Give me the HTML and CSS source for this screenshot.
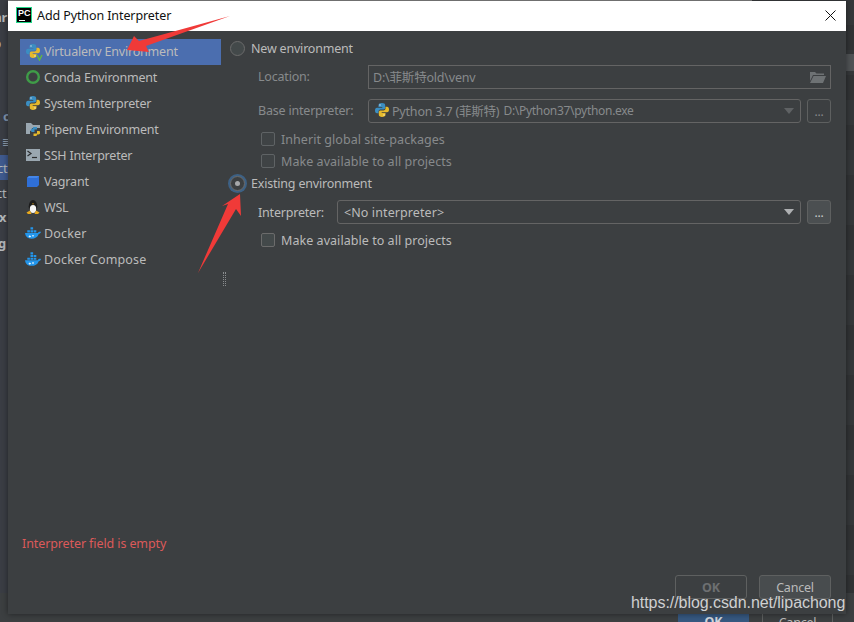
FILE: index.html
```html
<!DOCTYPE html>
<html lang="en">
<head>
    <meta charset="UTF-8">
    <meta name="viewport" content="width=device-width, initial-scale=1.0">
    <title>Add Python Interpreter</title>
    <link rel="stylesheet" href="styles.css">
</head>
<body>
    <svg width="0" height="0" class="defs">
        <defs>
            <symbol id="py" viewBox="0 0 16 16">
                <path fill="#3b8ec2" d="M8 1C5.600 1 4.500 1.900 4.500 3.200V5h3.800v.7H3C1.700 5.700 1 6.800 1 8.500c0 1.700.7 2.800 2 2.800h1.500V9.400c0-1.100.9-1.900 2-1.900h3c1 0 1.700-.7 1.700-1.700V3.200C11.200 1.900 10 1 8 1z"/>
                <path fill="#e5b92c" d="M8 15c2.400 0 3.500-.9 3.500-2.200V11H7.700v-.7H13c1.300 0 2-1.100 2-2.800 0-1.700-.7-2.800-2-2.800h-1.500v1.900c0 1.100-.9 1.900-2 1.900h-3c-1 0-1.700.7-1.700 1.700v2.600C4.800 14.100 6 15 8 15z"/>
                <circle cx="6" cy="3" r=".7" fill="#dfe6ea"/>
                <circle cx="10" cy="13" r=".7" fill="#fff6c8"/>
            </symbol>
            <symbol id="whale" viewBox="1 2.500 14 12">
                <path fill="#2396ec" d="M1 8.500h11.200c.5-1 1.400-1.400 2.800-1.100-.3 1.200-1 1.900-2 2-1 2.900-3.300 4.100-6.300 4.100-3.400 0-5.300-1.900-5.700-5z"/>
                <path fill="#e8f4fb" d="M4 11.500l1.200-1 1.200 1-1.200 1zM7 11l1-.8 1 .8-1 .8z"/>
                <path fill="#2396ec" d="M3 6h2.300v2H3zM5.800 6h2.300v2H5.800zM8.600 6h2.300v2H8.600zM5.800 3.500h2.300v2H5.800z"/>
            </symbol>
            <symbol id="whale-stack" viewBox="1 2 14 13">
                <path fill="#2396ec" d="M1 9.500h11.200c.5-1 1.400-1.400 2.800-1.100-.3 1.200-1 1.900-2 2-1 2.900-3.300 4.100-6.300 4.100-3.400 0-5.300-1.900-5.700-5z"/>
                <path fill="#e8f4fb" d="M4 12.500l1.200-1 1.200 1-1.200 1zM7 12l1-.8 1 .8-1 .8z"/>
                <path fill="#2396ec" d="M3 7.300h2.300v1.800H3zM5.800 7.300h2.300v1.800H5.800zM8.600 7.300h2.300v1.800H8.600zM5.800 5h2.300v1.800H5.800zM8.600 5h2.300v1.800H8.600zM5.800 2.700h2.300v1.800H5.800z"/>
            </symbol>
        </defs>
    </svg>

    <div class="backdrop-top"></div>
    <div class="backdrop-left">
        <span class="bl-selected"></span>
        <span class="bl bl-1">ar</span>
        <span class="bl bl-2">p</span>
        <span class="bl bl-3">c</span>
        <span class="bl bl-4">≣</span>
        <span class="bl bl-5">ct</span>
        <span class="bl bl-6">ct</span>
        <span class="bl bl-7">x</span>
        <span class="bl bl-8">g</span>
    </div>
    <div class="backdrop-right"><span class="right-block"></span></div>
    <div class="backdrop-bottom">
        <span class="under-ok">OK</span>
        <span class="under-cancel">Cancel</span>
    </div>

    <div class="dialog">
        <header class="titlebar">
            <span class="app-icon"><span class="app-icon-text">PC</span></span>
            <span class="title">Add Python Interpreter</span>
            <svg class="close" width="11" height="11" viewBox="0 0 11 11"><path d="M.5.500l10 10M10.500.500l-10 10" stroke="#111" stroke-width="1" fill="none"/></svg>
        </header>

        <div class="body">
            <ul class="side">
                <li class="side-item selected">
                    <span class="ic ic-venv">
                        <svg width="16" height="16"><use href="#py"/></svg>
                        <svg class="venv-tick" width="7" height="7" viewBox="0 0 7 7"><path d="M1 1l2.500 5L6 1" stroke="#62b543" stroke-width="1.500" fill="none"/></svg>
                    </span>Virtualenv Environment
                </li>
                <li class="side-item">
                    <span class="ic"><svg width="16" height="16" viewBox="0 0 16 16"><circle cx="8" cy="8" r="5.800" fill="none" stroke="#3f9c48" stroke-width="2.400"/></svg></span>Conda Environment
                </li>
                <li class="side-item">
                    <span class="ic"><svg width="16" height="16"><use href="#py"/></svg></span>System Interpreter
                </li>
                <li class="side-item">
                    <span class="ic"><svg width="16" height="16" viewBox="0 0 16 16">
                        <path fill="#9aa7b0" d="M1 2h5l2 2h-1v5l-2 1v3H1z"/>
                        <path fill="#9aa7b0" d="M6 4h9v3H6z"/>
                        <path fill="#3b8ec2" d="M8 6h4v2.500H9.500V11H7c-.6 0-1-.5-1-1.200V8.700C6 8 6.500 7.500 7.500 7.500H8z"/>
                        <path fill="#e5b92c" d="M10 15h-1.500v-2.500H12V10h2c.6 0 1 .5 1 1.200v1.100c0 .7-.5 1.200-1.500 1.200H12v.5c0 .6-.8 1-2 1z"/>
                    </svg></span>Pipenv Environment
                </li>
                <li class="side-item">
                    <span class="ic"><svg width="16" height="16" viewBox="0 0 16 16">
                        <rect x="1" y="2" width="14" height="12" fill="#9aa7b0"/>
                        <path d="M2.500 4l3.500 2.500-3.500 2.500" stroke="#2b2d2e" stroke-width="1.200" fill="none"/>
                        <path d="M7 10.500h5" stroke="#2b2d2e" stroke-width="1.200"/>
                    </svg></span>SSH Interpreter
                </li>
                <li class="side-item">
                    <span class="ic"><svg width="16" height="16" viewBox="0 0 16 16">
                        <path fill="#2f6fd6" d="M2 5l2-2h10v9l-2 2H2z"/>
                        <path fill="#4486e8" d="M2 5l2-2h10l-2 2z"/>
                    </svg></span>Vagrant
                </li>
                <li class="side-item">
                    <span class="ic"><svg width="16" height="16" viewBox="0 0 16 16">
                        <ellipse cx="8" cy="7.500" rx="4.300" ry="6.500" fill="#1c1c1c"/>
                        <ellipse cx="8" cy="10" rx="3.200" ry="4" fill="#f4f4f4"/>
                        <path fill="#e8a91c" d="M1.500 13.500l3.500-2 1.500 3.500H3zM14.500 13.500l-3.500-2-1.500 3.500H13zM7 4.500h2l-1 1.200z"/>
                    </svg></span>WSL
                </li>
                <li class="side-item docker">
                    <span class="ic"><svg width="16" height="16"><use href="#whale"/></svg></span>Docker
                </li>
                <li class="side-item docker">
                    <span class="ic"><svg width="16" height="16"><use href="#whale-stack"/></svg></span>Docker Compose
                </li>
            </ul>

            <div class="splitter"></div>

            <div class="panel">
                <label class="radio-row">
                    <span class="radio"></span>New environment
                </label>
                <div class="field-row muted first">
                    <span class="field-label">Location:</span>
                    <div class="input wide">D:\菲斯特old\venv
                        <svg class="folder" width="16" height="12" viewBox="0 0 16 12"><path fill="#6e7274" d="M0 1h5l1.500 1.500H14V4H3L0 10zM3.500 5H16l-3 7H0z"/></svg>
                    </div>
                </div>
                <div class="field-row muted base">
                    <span class="field-label">Base interpreter:</span>
                    <div class="input select">
                        <svg width="16" height="16" class="select-py"><use href="#py"/></svg>
                        <span>Python 3.7 (菲斯特)</span> <span class="path">D:\Python37\python.exe</span>
                        <span class="caret caret-dim"></span>
                    </div>
                    <span class="more">...</span>
                </div>
                <label class="check-row muted">
                    <span class="check"></span>Inherit global site-packages
                </label>
                <label class="check-row muted tight">
                    <span class="check"></span>Make available to all projects
                </label>

                <label class="radio-row existing">
                    <span class="radio on"></span>Existing environment
                </label>
                <div class="field-row interp">
                    <span class="field-label">Interpreter:</span>
                    <div class="input select active">&lt;No interpreter&gt;
                        <span class="caret"></span>
                    </div>
                    <span class="more raised">...</span>
                </div>
                <label class="check-row enabled">
                    <span class="check"></span>Make available to all projects
                </label>
            </div>
        </div>

        <div class="error">Interpreter field is empty</div>

        <div class="buttons">
            <span class="btn btn-off">OK</span>
            <span class="btn">Cancel</span>
        </div>
    </div>

    <svg class="arrows" width="854" height="622" viewBox="0 0 854 622">
        <path fill="#f03a38" d="M230 16L146 46 149 52 127 50 134 36 139 41z"/>
        <path fill="#f03a38" d="M198 273L228 204 222 206 240 194 241 216 236 209z"/>
    </svg>

    <div class="watermark">https://blog.csdn.net/lipachong</div>
</body>
</html>
```

FILE: styles.css
```css
html, body {
    margin: 0;
    padding: 0;
}
body {
    width: 854px;
    height: 622px;
    position: relative;
    overflow: hidden;
    background: #3c3f41;
    font-family: "Noto Sans", "Noto Sans CJK SC", sans-serif;
    font-size: 12.5px;
    letter-spacing: -0.2px;
    color: #bbbbbb;
}
.defs {
    position: absolute;
}

/* window behind the dialog */
.backdrop-top {
    position: absolute;
    left: 0;
    top: 0;
    width: 752px;
    height: 1px;
    background: #8a8a8a;
}
.backdrop-left {
    position: absolute;
    left: 0;
    top: 0;
    width: 8px;
    height: 593px;
    background: #3a3d44;
    color: #b4b7ba;
    font-weight: bold;
    font-size: 13px;
}
.bl-selected {
    position: absolute;
    left: 0;
    top: 155px;
    width: 8px;
    height: 25px;
    background: #3f5a8f;
}
.bl {
    position: absolute;
    line-height: 16px;
}
.bl-1 { top: 9px; left: -6px; }
.bl-2 { top: 35px; left: -7px; }
.bl-3 { top: 108px; left: 3px; color: #7f93ad; }
.bl-4 { top: 134px; left: 2px; font-size: 10px; font-weight: normal; color: #8b99a8; }
.bl-5 { top: 160px; left: -3px; font-weight: normal; }
.bl-6 { top: 185px; left: -4px; font-weight: normal; }
.bl-7 { top: 209px; left: -1px; }
.bl-8 { top: 235px; left: -2px; }
.backdrop-right {
    position: absolute;
    right: 0;
    top: 0;
    width: 8px;
    height: 622px;
    background: repeating-linear-gradient(#35383a 0, #35383a 25px, #313335 25px, #313335 50px);
}
.right-block {
    position: absolute;
    left: 0;
    top: 54px;
    width: 8px;
    height: 17px;
    background: #505356;
}
.backdrop-bottom {
    position: absolute;
    left: 0;
    right: 0;
    bottom: 0;
    height: 29px;
    background: #3c3f41;
}
.under-ok, .under-cancel {
    position: absolute;
    top: 17px;
    width: 71px;
    height: 26px;
    box-sizing: border-box;
    text-align: center;
    line-height: 24px;
}
.under-ok {
    left: 678px;
    background: #365880;
    color: #d0d6dc;
    font-weight: bold;
}
.under-cancel {
    left: 762px;
    border: 1px solid #5e6060;
}

/* dialog window */
.dialog {
    position: absolute;
    left: 8px;
    top: 1px;
    width: 838px;
    height: 613px;
    background: #3c3f41;
    box-shadow: 0 0 6px rgba(0, 0, 0, 0.45);
    display: flex;
    flex-direction: column;
}
.titlebar {
    height: 30px;
    box-sizing: border-box;
    flex: none;
    background: #ffffff;
    color: #111111;
    display: flex;
    align-items: center;
    padding: 0 10px 2px 8px;
    letter-spacing: -0.1px;
}
.app-icon {
    width: 16px;
    height: 16px;
    background: #000000;
    border: 1px solid #21d789;
    box-sizing: border-box;
    margin-right: 5px;
    color: #ffffff;
    position: relative;
    display: block;
}
.app-icon-text {
    display: block;
    padding-left: 1px;
    font: bold 9px/10px "Liberation Sans", sans-serif;
    letter-spacing: 0;
}
.app-icon::after {
    content: "";
    position: absolute;
    left: 2px;
    bottom: 1px;
    width: 6px;
    height: 1px;
    background: #ffffff;
}
.title {
    flex: 1;
}

.body {
    display: flex;
    flex: none;
    height: 262px;
    padding: 8px 15px 0 12px;
}
.side {
    list-style: none;
    margin: 0;
    padding: 0;
    width: 201px;
    flex: none;
}
.side-item {
    height: 26px;
    box-sizing: border-box;
    padding: 0 0 2px 5px;
    display: flex;
    align-items: center;
    white-space: nowrap;
}
.side-item.selected {
    background: #4b6eaf;
}
.side-item.docker {
    letter-spacing: 0.15px;
}
.ic {
    width: 16px;
    height: 16px;
    margin-right: 3px;
    position: relative;
    display: block;
    flex: none;
}
.ic svg {
    display: block;
}
.ic .venv-tick {
    position: absolute;
    right: -2px;
    bottom: -2px;
}
.splitter {
    width: 3px;
    height: 14px;
    margin: 233px 4px 0 2px;
    flex: none;
    border-left: 1px dotted #8a8d8f;
    border-right: 1px dotted #8a8d8f;
    box-sizing: border-box;
}

.panel {
    flex: 1;
    min-width: 0;
    margin-top: -1px;
}
.radio-row {
    display: flex;
    align-items: center;
    height: 20px;
}
.radio {
    width: 13px;
    height: 13px;
    border: 1px solid #6b6b6b;
    border-radius: 50%;
    background: #43494a;
    margin-right: 6px;
    flex: none;
    position: relative;
}
.radio.on {
    background: #3c3f41;
    border-color: #6b6b6b;
    box-shadow: 0 0 0 2px #3d6185;
}
.radio.on::after {
    content: "";
    position: absolute;
    left: 4px;
    top: 4px;
    width: 5px;
    height: 5px;
    border-radius: 50%;
    background: #a6a8aa;
}
.field-row {
    display: flex;
    align-items: center;
    margin-left: 28px;
}
.field-row.first {
    margin-top: 7px;
}
.field-row.base {
    margin-top: 10px;
}
.field-label {
    width: 110px;
    flex: none;
}
.muted .field-label {
    padding-bottom: 2px;
}
.muted {
    color: #878a8c;
}
.input {
    height: 24px;
    box-sizing: border-box;
    border: 1px solid #646464;
    background: #3c3f41;
    flex: 1;
    display: flex;
    align-items: center;
    padding-left: 5px;
    position: relative;
    white-space: nowrap;
}
.muted .input {
    padding-bottom: 2px;
}
.wide {
    padding-left: 4px;
}
.folder {
    position: absolute;
    right: 4px;
    top: 5px;
}
.select {
    border-radius: 3px;
}
.select-py {
    margin-right: 2px;
}
.select > span {
    margin-right: 4px;
}
.path {
    font-size: 12px;
    letter-spacing: -0.3px;
}
.caret {
    position: absolute;
    right: 6px;
    top: 8px;
    width: 0;
    height: 0;
    border-left: 5px solid transparent;
    border-right: 5px solid transparent;
    border-top: 6px solid #aeb0b2;
}
.select > .caret {
    margin: 0;
}
.caret-dim {
    border-top-color: #5f6264;
}
.more {
    width: 24px;
    height: 24px;
    box-sizing: border-box;
    margin-left: 6px;
    border: 1px solid #5e6060;
    border-radius: 3px;
    flex: none;
    text-align: center;
    line-height: 24px;
    font-size: 12px;
}
.more.raised {
    background: #4b4f51;
    color: #c9cbcd;
}
.check-row {
    display: flex;
    align-items: center;
    height: 20px;
    margin-left: 31px;
    margin-top: 6px;
    letter-spacing: 0.05px;
}
.check-row.tight {
    margin-top: 2px;
}
.check {
    width: 14px;
    height: 14px;
    box-sizing: border-box;
    border: 1px solid #5f6365;
    border-radius: 2px;
    background: #3f4345;
    margin-right: 6px;
    flex: none;
}
.check-row.enabled .check {
    border-color: #6b6b6b;
    background: #43494a;
}
.existing {
    margin-top: 2px;
}
.interp {
    margin-top: 7px;
}
.interp .field-label {
    width: 79px;
}
.active {
    padding-left: 6px;
    letter-spacing: 0.1px;
}

.error {
    flex: none;
    margin-top: 234px;
    margin-left: 14px;
    height: 18px;
    line-height: 18px;
    color: #dc5a5a;
    letter-spacing: -0.1px;
}
.buttons {
    display: flex;
    justify-content: flex-end;
    gap: 12px;
    padding-right: 15px;
    margin-top: 22px;
}
.btn {
    width: 72px;
    height: 24px;
    box-sizing: border-box;
    border: 1px solid #5e6060;
    border-radius: 3px;
    background: #484c4e;
    text-align: center;
    line-height: 24px;
}
.btn-off {
    background: transparent;
    color: #6d6f71;
    font-weight: bold;
}

.arrows {
    position: absolute;
    left: 0;
    top: 0;
    pointer-events: none;
}
.watermark {
    position: absolute;
    left: 631px;
    top: 593px;
    font-family: "Liberation Sans", sans-serif;
    font-size: 16px;
    letter-spacing: -0.06px;
    line-height: 20px;
    color: #cfd0d1;
    white-space: nowrap;
}
```
